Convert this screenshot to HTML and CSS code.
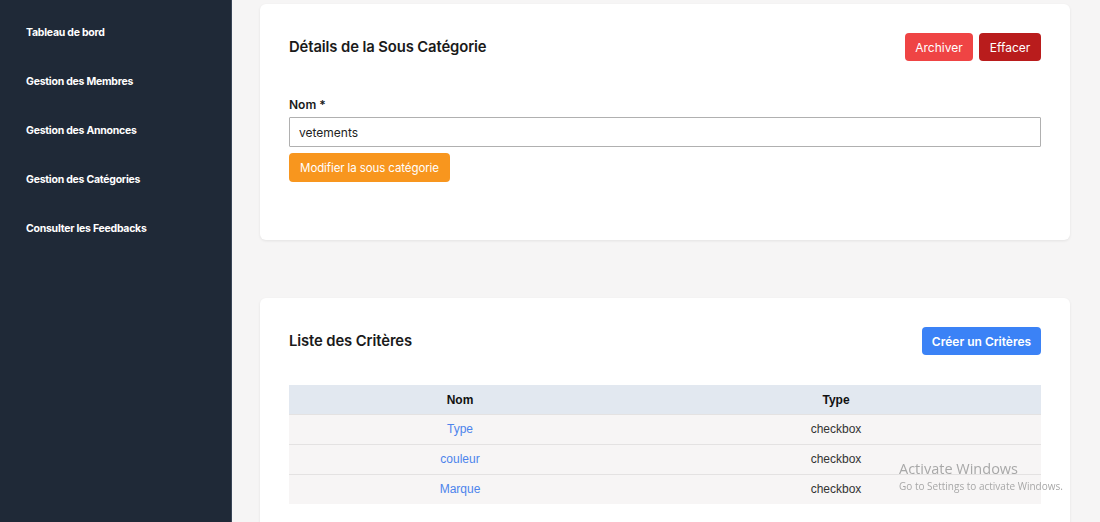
FILE: index.html
```html
<!DOCTYPE html>
<html lang="fr">
<head>
<meta charset="utf-8">
<title>Sous Catégorie</title>
<link rel="stylesheet" href="styles.css">
</head>
<body>
<div class="layout">
  <aside class="sidebar">
    <nav class="nav">
      <a class="nav-item">Tableau de bord</a>
      <a class="nav-item">Gestion des Membres</a>
      <a class="nav-item">Gestion des Annonces</a>
      <a class="nav-item">Gestion des Catégories</a>
      <a class="nav-item">Consulter les Feedbacks</a>
    </nav>
  </aside>
  <main class="main">
    <section class="card card-details">
      <div class="card-head">
        <h2 class="card-title">Détails de la Sous Catégorie</h2>
        <div class="actions">
          <button class="btn btn-archive">Archiver</button>
          <button class="btn btn-delete">Effacer</button>
        </div>
      </div>
      <form class="form">
        <label class="label">Nom *</label>
        <input class="input" type="text" value="vetements">
        <div><button type="button" class="btn btn-orange">Modifier la sous catégorie</button></div>
      </form>
    </section>
    <section class="card card-list">
      <div class="card-head">
        <h2 class="card-title">Liste des Critères</h2>
        <button class="btn btn-blue">Créer un Critères</button>
      </div>
      <table class="table">
        <thead>
          <tr><th class="col-name">Nom</th><th>Type</th></tr>
        </thead>
        <tbody>
          <tr><td><a class="link">Type</a></td><td>checkbox</td></tr>
          <tr><td><a class="link">couleur</a></td><td>checkbox</td></tr>
          <tr><td><a class="link">Marque</a></td><td>checkbox</td></tr>
        </tbody>
      </table>
    </section>
  </main>
</div>
<div class="watermark">
  <div class="wm-title">Activate Windows</div>
  <div class="wm-sub">Go to Settings to activate Windows.</div>
</div>
</body>
</html>
```
FILE: styles.css
```css
* { box-sizing: border-box; }
html, body { margin: 0; padding: 0; }
body {
  font-family: Inter, "Liberation Sans", sans-serif;
  background: #f6f5f5;
  color: #111827;
  height: 522px;
  overflow: hidden;
}
.layout { display: flex; min-height: 522px; }
.sidebar {
  width: 232px;
  flex: 0 0 232px;
  background: #1f2937;
  border-right: 1px solid #3a4658;
  min-height: 522px;
}
.nav { display: flex; flex-direction: column; padding: 26px 0 0 26px; gap: 35px; }
.nav-item {
  color: #ffffff;
  font-size: 10.5px;
  font-weight: 700;
  line-height: 14px;
  letter-spacing: -0.25px;
}
.main {
  flex: 1;
  padding: 4px 30px 0 28px;
  display: flex;
  flex-direction: column;
  gap: 58px;
}
.card {
  background: #ffffff;
  border-radius: 6px;
  box-shadow: 0 1px 3px rgba(0,0,0,0.08);
  padding: 29px 29px 0 29px;
}
.card-details { height: 236px; }
.card-list { height: 240px; }
.card-head {
  display: flex;
  justify-content: space-between;
  align-items: center;
  height: 28px;
}
.card-title {
  margin: 0;
  font-size: 14.8px;
  font-weight: 600;
  color: #1a1a1a;
  letter-spacing: -0.1px;
}
.actions { display: flex; gap: 6px; }
.btn {
  border: none;
  border-radius: 4px;
  color: #fff;
  font-family: Inter, "Liberation Sans", sans-serif;
  font-size: 12px;
  height: 28px;
  padding: 0 10px;
  cursor: pointer;
}
.btn-archive { background: #ef4444; width: 68px; }
.btn-delete { background: #b91c1c; width: 62px; }
.btn-orange { background: #f8961e; height: 29px; width: 161px; padding: 0; font-size: 11.5px; letter-spacing: -0.1px; }
.btn-blue { background: #3b82f6; font-weight: 600; width: 119px; padding: 0; }
.form { display: flex; flex-direction: column; margin-top: 37px; }
.label { font-size: 12px; font-weight: 600; color: #1a1a1a; line-height: 14px; margin-bottom: 5px; }
.input {
  height: 30px;
  border: 1px solid #b0b0b0;
  border-radius: 1px;
  padding: 0 9px;
  font-family: Inter, "Liberation Sans", sans-serif;
  font-size: 12px;
  color: #222;
  margin-bottom: 6px;
}
.table {
  margin-top: 30px;
  width: 100%;
  border-collapse: collapse;
  font-family: "Liberation Sans", Arial, sans-serif;
  font-size: 12px;
}
.table th {
  background: #e2e8f0;
  height: 29px;
  font-weight: 700;
  color: #111;
  text-align: center;
  padding-top: 2px;
}
.table .col-name { width: 342px; }
.table td {
  background: #f7f5f5;
  height: 30px;
  text-align: center;
  color: #333;
  border-top: 1px solid #e4e2e2;
}
.link { color: #4d84ec; }
.watermark {
  position: fixed;
  left: 899px;
  top: 459px;
  color: #a8a8a8;
  font-family: "Open Sans", "Liberation Sans", sans-serif;
  pointer-events: none;
}
.wm-title { font-size: 14.5px; line-height: 19px; }
.wm-sub { font-size: 10px; line-height: 14px; margin-top: 1px; }
```
